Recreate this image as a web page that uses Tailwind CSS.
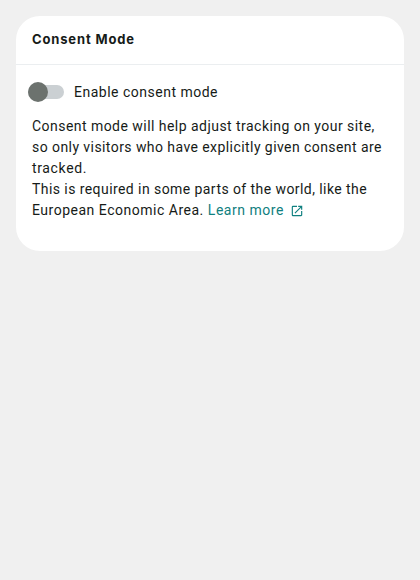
<!DOCTYPE html>
<html lang="en">
<head>
<meta charset="utf-8">
<title>Consent Mode</title>
<script src="https://cdn.jsdelivr.net/npm/@tailwindcss/browser@4"></script>
</head>
<body class="min-h-screen bg-[#f0f0f0] p-4 font-['Roboto','Open_Sans',sans-serif] text-[14px] leading-[21px] text-[#161b18]">
<section class="h-[235px] overflow-hidden rounded-[24px] bg-white">
  <header class="flex h-[49px] items-center border-b border-[#ebeef0] px-4 pb-0.5">
    <h2 class="font-['Inter',sans-serif] text-[13px] font-bold tracking-[0.85px]">Consent Mode</h2>
  </header>
  <div class="px-4 pt-[17px]">
    <label class="flex h-[21px] items-start">
      <span class="-ml-1 flex h-5 w-9 shrink-0 items-center">
        <span class="flex h-3.5 w-9 items-center rounded-full bg-[#cbd0d3]">
          <span class="h-5 w-5 shrink-0 rounded-full bg-[#6c726e]"></span>
        </span>
      </span>
      <span class="ml-2.5 tracking-[0.5px]">Enable consent mode</span>
    </label>
    <p class="mt-[13px] whitespace-nowrap">
      <span class="block tracking-[0.46px]">Consent mode will help adjust tracking on your site,</span>
      <span class="block tracking-[0.43px]">so only visitors who have explicitly given consent are</span>
      <span class="block tracking-[0.65px]">tracked.</span>
      <span class="block tracking-[0.43px]">This is required in some parts of the world, like the</span>
      <span class="flex"><span class="tracking-[0.51px]">European Economic Area.</span><a class="ml-1 flex items-center tracking-[0.53px] text-[#108080]">Learn more
        <svg class="ml-1.5 h-3.5 w-3.5" viewBox="0 0 24 24" fill="currentColor"><path d="M19 19H5V5h7V3H5a2 2 0 0 0-2 2v14a2 2 0 0 0 2 2h14c1.1 0 2-.9 2-2v-7h-2v7zM14 3v2h3.590l-9.830 9.830 1.410 1.410L19 6.410V10h2V3h-7z"/></svg></a></span>
    </p>
  </div>
</section>
</body>
</html>
